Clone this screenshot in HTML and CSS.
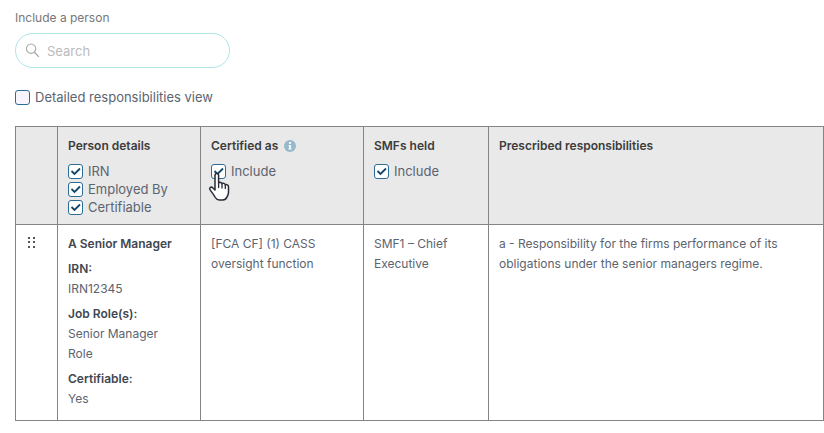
FILE: index.html
```html
<!DOCTYPE html>
<html lang="en">
<head>
    <meta charset="UTF-8">
    <meta name="viewport" content="width=device-width, initial-scale=1.0">
    <title>Responsibilities</title>
    <link rel="stylesheet" href="styles.css">
</head>
<body>
    <form class="filters">
        <label class="search-label" for="search">Include a person</label>
        <div class="search-box">
            <svg class="search-icon" viewBox="0 0 16 16" fill="none" stroke="currentColor">
                <circle cx="6.5" cy="6" r="5" stroke-width="1.2"/>
                <path d="M10 9.8l4.8 5" stroke-width="1.5"/>
            </svg>
            <input type="text" id="search" placeholder="Search">
        </div>
        <label class="check"><input type="checkbox"> Detailed responsibilities view</label>
    </form>

    <table class="people">
        <colgroup>
            <col class="col-drag">
            <col class="col-person">
            <col class="col-certified">
            <col class="col-smf">
            <col>
        </colgroup>
        <thead>
            <tr>
                <th></th>
                <th>
                    <div class="heading">Person details</div>
                    <label class="check"><input type="checkbox" checked> IRN</label>
                    <label class="check"><input type="checkbox" checked> Employed By</label>
                    <label class="check"><input type="checkbox" checked> Certifiable</label>
                </th>
                <th>
                    <div class="heading">
                        Certified as
                        <svg class="info-icon" viewBox="0 0 12 12">
                            <circle cx="6" cy="6" r="6" fill="#98b8cc"/>
                            <path d="M5 2h2v2H5zM4.5 5H7v3.5h.7v1H4.3v-1H5V6h-.5z" fill="#f4f8fa"/>
                        </svg>
                    </div>
                    <label class="check">
                        <input type="checkbox" checked> Include
                        <svg class="pointer" viewBox="0 0 22 29">
                            <path d="M7 3.5C7 .7 10.6.7 10.6 3.5V11c.8-1 3.1-.8 3.4.7 1-.8 3-.4 3.3 1.1 1.2-.6 3.2.1 3.2 2.1v5.6c0 2-1.2 3.5-1.7 4.9-.7 1.7-2.1 2.6-4 2.6h-3.5c-2 0-3.1-.9-4-2.5-1.3-2.5-3.2-4.9-5.2-7.6-1.4-1.9.8-3.6 2.5-2.2L7 18z" fill="#fff" stroke="#292b38" stroke-width="1.5" stroke-linejoin="round"/>
                            <path d="M10.6 11v4.5M14 12v4M17.3 13v3.5" fill="none" stroke="#292b38" stroke-width="1.3" stroke-linecap="round"/>
                        </svg>
                    </label>
                </th>
                <th>
                    <div class="heading">SMFs held</div>
                    <label class="check"><input type="checkbox" checked> Include</label>
                </th>
                <th>
                    <div class="heading">Prescribed responsibilities</div>
                </th>
            </tr>
        </thead>
        <tbody>
            <tr>
                <td class="drag">
                    <svg viewBox="0 0 8 12" fill="#555">
                        <path d="M0 0h2v2H0zM5 0h2v2H5zM0 4h2v2H0zM5 4h2v2H5zM0 9h2v2H0zM5 9h2v2H5z"/>
                    </svg>
                </td>
                <td>
                    <div class="item"><b>A Senior Manager</b></div>
                    <div class="item"><b>IRN:</b><br>IRN12345</div>
                    <div class="item"><b>Job Role(s):</b><br>Senior Manager Role</div>
                    <div class="item"><b>Certifiable:</b><br>Yes</div>
                </td>
                <td>[FCA CF] (1) CASS oversight function</td>
                <td>SMF1 – Chief Executive</td>
                <td>a - Responsibility for the firms performance of its obligations under the senior managers regime.</td>
            </tr>
        </tbody>
    </table>
</body>
</html>
```

FILE: styles.css
```css
* {
    box-sizing: border-box;
}

body {
    font-family: Inter, 'Liberation Sans', sans-serif;
    font-size: 12px;
    line-height: 20px;
    color: #5b6470;
    background-color: white;
    margin: 0;
    padding: 8px 0 8px 15px;
}

.filters {
    margin-bottom: 20px;
}

.search-label {
    display: block;
    font-size: 12px;
    color: #777;
}

.search-box {
    display: flex;
    align-items: center;
    gap: 7px;
    max-width: 215px;
    height: 35px;
    margin: 5px 0 20px;
    padding: 0 9px;
    border: 1px solid #aee5e7;
    border-radius: 18px;
}

.search-icon {
    flex: none;
    width: 15px;
    height: 15px;
    color: #aaa;
}

.search-box input {
    width: 100%;
    padding: 0;
    border: none;
    outline: none;
    background: none;
    font-family: inherit;
    font-size: 13px;
}

.search-box input::placeholder {
    color: #bbb;
}

.check {
    display: flex;
    align-items: center;
    gap: 5px;
    position: relative;
    font-size: 13px;
    font-weight: 400;
    line-height: 18px;
    color: #5b6470;
}

.check input {
    appearance: none;
    flex: none;
    width: 15px;
    height: 15px;
    margin: 0;
    border: 1px solid #2b6d94;
    border-radius: 3px;
    background-color: #f8f5ff;
}

.check input:checked {
    background: white url("data:image/svg+xml,%3Csvg xmlns='http://www.w3.org/2000/svg' viewBox='0 0 13 13'%3E%3Cpath d='M2.5 6l3 3 5.5-5.5' fill='none' stroke='%2312476b' stroke-width='1.8'/%3E%3C/svg%3E") center / 13px no-repeat;
}

.people {
    width: 100%;
    table-layout: fixed;
    border-collapse: collapse;
}

.people th,
.people td {
    padding: 9px 16px 9px 10px;
    border: 1px solid #858585;
    text-align: left;
    vertical-align: top;
}

.people th {
    padding-bottom: 8px;
    background-color: #e9e9e9;
}

.col-drag {
    width: 42px;
}

.col-person {
    width: 143px;
}

.col-certified {
    width: 163px;
}

.col-smf {
    width: 125px;
}

.heading {
    display: flex;
    align-items: center;
    gap: 6px;
    margin-bottom: 6px;
    font-weight: 600;
    color: #3c3c3c;
}

.info-icon {
    width: 12px;
    height: 12px;
}

.pointer {
    position: absolute;
    left: -3px;
    top: 10px;
    width: 22px;
    height: 29px;
}

.item {
    margin-bottom: 5px;
}

.item:last-child {
    margin-bottom: 2px;
}

.item b {
    font-weight: 600;
    color: #3f4752;
}

.people .drag {
    padding-right: 10px;
}

.drag svg {
    display: block;
    width: 8px;
    height: 12px;
    margin: 3px 2px;
}
```
